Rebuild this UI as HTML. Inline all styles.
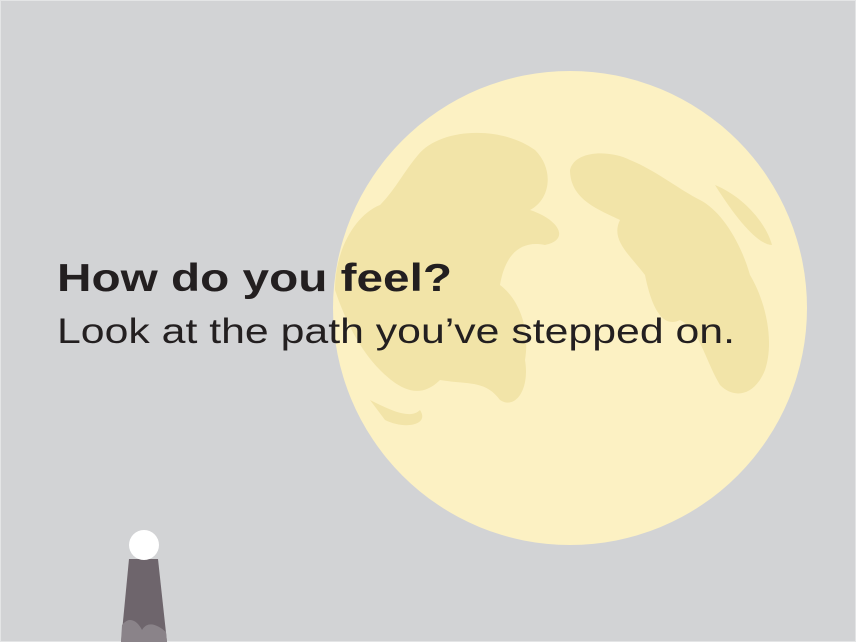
<!DOCTYPE html>
<html><head><meta charset="utf-8"><style>
html,body{margin:0;padding:0;background:#d2d3d5;}
svg{display:block}
</style></head><body>
<svg width="856" height="642" viewBox="0 0 856 642" xmlns="http://www.w3.org/2000/svg">
<rect width="856" height="642" fill="#d2d3d5"/>
<rect x="0" y="0" width="856" height="642" fill="none" stroke="#e4e5e6" stroke-width="2"/>
<defs><clipPath id="m"><circle cx="570" cy="308" r="237"/></clipPath></defs>
<circle cx="570" cy="308" r="237" fill="#fcf1c3"/>
<g clip-path="url(#m)" fill="#f2e4a8">
<path d="M418 155 C440 128 500 125 535 150 C555 170 550 200 530 210 C560 220 570 240 545 245 C520 240 505 255 500 285 C520 300 530 330 525 360 C530 390 515 410 500 400 C485 380 470 385 440 380 C420 400 400 390 380 370 C360 350 345 320 335 290 C335 250 355 215 380 205 C395 190 405 170 418 155Z"/>
<path d="M570 170 C575 150 610 150 630 160 C655 170 680 190 700 200 C720 210 740 240 750 275 C765 300 775 340 765 370 C755 395 735 400 720 385 C705 360 700 330 680 320 C660 330 650 300 645 275 C630 255 610 240 620 220 C600 210 570 200 570 170Z"/>
<path d="M715 185 C740 195 765 220 772 245 C760 245 740 225 715 185Z"/>
<path d="M370 400 C390 410 410 420 420 410 C430 425 405 430 385 420Z"/>
<ellipse cx="505" cy="220" rx="18" ry="8"/>
</g>
<text x="57" y="291" font-family="Liberation Sans, sans-serif" font-weight="bold" font-size="39" fill="#231f20" textLength="395" lengthAdjust="spacingAndGlyphs">How do you feel?</text>
<text x="57" y="343" font-family="Liberation Sans, sans-serif" font-size="35" fill="#231f20" textLength="678" lengthAdjust="spacingAndGlyphs">Look at the path you’ve stepped on.</text>
<polygon points="129,559 158,559 167,642 121,642" fill="#6e656c"/>
<path d="M122 625 C130 615 138 622 142 630 C148 620 158 625 166 632 L167 642 L121 642Z" fill="#8a8389"/>
<circle cx="144" cy="545" r="15" fill="#ffffff"/>
</svg>
</body></html>
